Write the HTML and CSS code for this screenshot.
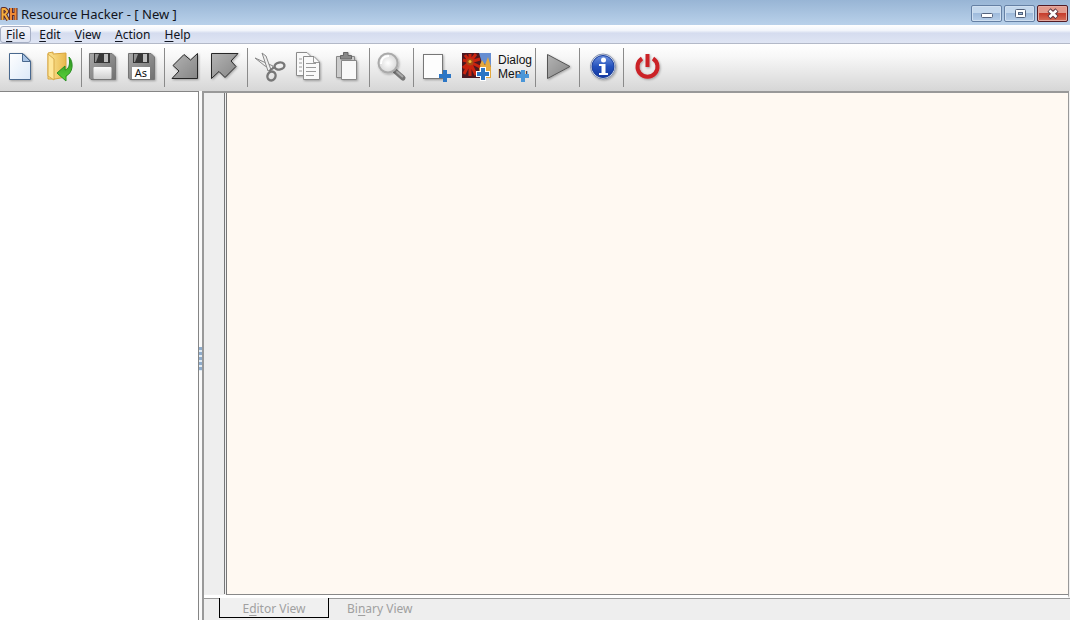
FILE: index.html
```html
<!DOCTYPE html>
<html lang="en">
<head>
<meta charset="utf-8">
<title>Resource Hacker - [ New ]</title>
<link rel="stylesheet" href="styles.css">
</head>
<body>
<div class="window">
  <header class="titlebar">
    <svg class="logo" width="18" height="16" viewBox="0 0 18 16" fill="none" stroke-linejoin="round">
      <g stroke="#5c2a2c" stroke-width="4"><path d="M2.500 14V3H5L7 5V6L5 8.500H3M5 8.500L8 14"/><path d="M11 2V14M15.500 2V14M11 8H15.500"/></g>
      <path stroke="#f8ae3c" stroke-width="2" d="M2.500 14V3H5L7 5V6L5 8.500H3M5 8.500L8 14"/>
      <path stroke="#ee8a35" stroke-width="2" d="M11 2V14M15.500 2V14M11 8H15.500"/>
    </svg>
    <h1 class="title">Resource Hacker - [ New ]</h1>
    <div class="controls">
      <button class="control" aria-label="Minimize"><svg width="14" height="12" viewBox="0 0 14 12"><rect x="1.500" y="5.500" width="11" height="4" rx="1" fill="#fff" stroke="#53627c"/></svg></button>
      <button class="control" aria-label="Maximize"><svg width="14" height="12" viewBox="0 0 14 12"><rect x="2.500" y="1.500" width="10" height="8" rx="1" fill="#fff" stroke="#53627c"/><rect x="5.500" y="4.500" width="4" height="2" fill="#9bb8d8" stroke="#53627c"/></svg></button>
      <button class="control close" aria-label="Close"><svg width="14" height="12" viewBox="0 0 14 12"><path d="M3 2L11 9.500M11 2L3 9.500" stroke="#5a3540" stroke-width="4.500"/><path d="M3.500 2.500L10.500 9M10.500 2.500L3.500 9" stroke="#fff" stroke-width="2.600"/></svg></button>
    </div>
  </header>

  <nav class="menubar">
    <button class="menu active"><u>F</u>ile</button>
    <button class="menu"><u>E</u>dit</button>
    <button class="menu"><u>V</u>iew</button>
    <button class="menu"><u>A</u>ction</button>
    <button class="menu"><u>H</u>elp</button>
  </nav>

  <div class="toolbar" role="toolbar">
    <svg class="defs" width="0" height="0">
      <defs>
        <linearGradient id="page" x1="0" y1="0" x2="1" y2="1"><stop offset="0" stop-color="#fff"/><stop offset="1" stop-color="#dce9f8"/></linearGradient>
        <linearGradient id="metal" x1="0" y1="0" x2="1" y2="1"><stop offset="0" stop-color="#a8a8a8"/><stop offset="1" stop-color="#707070"/></linearGradient>
        <linearGradient id="folder" x1="0" y1="0" x2="1" y2="0"><stop offset="0" stop-color="#fbe494"/><stop offset="1" stop-color="#e9b94d"/></linearGradient>
        <linearGradient id="green" x1="0" y1="0" x2="0" y2="1"><stop offset="0" stop-color="#2b8f21"/><stop offset="1" stop-color="#5cd63a"/></linearGradient>
        <linearGradient id="arrow" x1="0" y1="0" x2="1" y2="1"><stop offset="0" stop-color="#b4b4b4"/><stop offset="1" stop-color="#858585"/></linearGradient>
        <linearGradient id="label" x1="0" y1="0" x2="0" y2="1"><stop offset="0" stop-color="#fafafa"/><stop offset="1" stop-color="#cfcfcf"/></linearGradient>
        <linearGradient id="blue" x1="0" y1="0" x2="0" y2="1"><stop offset="0" stop-color="#6f93e0"/><stop offset=".5" stop-color="#2452bd"/><stop offset="1" stop-color="#1437a0"/></linearGradient>
        <radialGradient id="glass"><stop offset="0" stop-color="#fff"/><stop offset="1" stop-color="#d8d8d8"/></radialGradient>
        <filter id="shadow" x="-20%" y="-20%" width="150%" height="150%"><feDropShadow dx="1" dy="1" stdDeviation="1" flood-opacity=".3"/></filter>
      </defs>
    </svg>

    <button class="tool" aria-label="New"><svg viewBox="2 48 39 38"><path filter="url(#shadow)" d="M9.500 53.500H23L30.500 61V79.500H9.500Z" fill="url(#page)" stroke="#49688e"/><path d="M22.500 53.500V61.500H30.500Z" fill="#a9c4e5" stroke="#49688e"/></svg></button>
    <button class="tool" aria-label="Open"><svg viewBox="41 48 39 38">
      <path d="M48 53L53 52V54L66 53V77L55 79H48Z" fill="url(#folder)" stroke="#d8a53e"/>
      <path d="M48 54L54 59V80L48 76Z" fill="#ffe79a" stroke="#d8aa49"/>
      <path d="M69 57C74 62 73 73 66 76V81L57 73L65 66V70C70 69 70 62 69 57Z" fill="url(#green)" stroke="#288f20"/>
    </svg></button>
    <span class="divider"></span>
    <button class="tool" aria-label="Save"><svg viewBox="85 48 39 38"><g filter="url(#shadow)"><path d="M89.500 53.500H112L115.500 57V79.500H91L89.500 78Z" fill="url(#metal)" stroke="#747474"/><path d="M94 53H110V63H94Z" fill="#383838"/><path d="M95 54H99L96 62H95Z" fill="#929292"/><rect x="104" y="54" width="4" height="8" fill="#bfbfbf"/><rect x="93.500" y="67" width="18" height="12" rx="1" fill="url(#label)"/></g></svg></button>
    <button class="tool" aria-label="Save As"><svg viewBox="124 48 39 38"><g filter="url(#shadow)"><path d="M128.500 53.500H151L154.500 57V79.500H130L128.500 78Z" fill="url(#metal)" stroke="#747474"/><path d="M133 53H149V63H133Z" fill="#383838"/><path d="M134 54H138L135 62H134Z" fill="#929292"/><rect x="143" y="54" width="4" height="8" fill="#bfbfbf"/><rect x="132" y="67" width="18" height="12" fill="#fff"/></g><text class="as-text" x="141" y="77" text-anchor="middle">As</text></svg></button>
    <span class="divider"></span>
    <button class="tool" aria-label="Load script"><svg viewBox="168 48 39 38"><path filter="url(#shadow)" d="M197.500 53.500V78.500H172L179 71L173 65.500L184 54.500L190.500 60Z" fill="url(#arrow)" stroke="#252525"/></svg></button>
    <button class="tool" aria-label="Save script"><svg viewBox="207 48 39 38"><path filter="url(#shadow)" d="M211.500 53.500H238L231 61L236 66.500L225 77.500L219 71.500L211.500 78.500Z" fill="url(#arrow)" stroke="#252525"/></svg></button>
    <span class="divider"></span>
    <button class="tool" aria-label="Cut"><svg viewBox="251 48 39 38" fill="none"><path d="M255 58L273 66L272 69L265 66Z" fill="#eee" stroke="#888"/><path d="M262 53L266 56L271 70L268 71Z" fill="#eee" stroke="#888"/><path d="M269 71L275 67" stroke="#777" stroke-width="2"/><ellipse cx="279.500" cy="66" rx="5" ry="3.500" transform="rotate(-12 279.500 66)" stroke="#777" stroke-width="2.400"/><ellipse cx="271.500" cy="76" rx="4" ry="4.500" transform="rotate(25 271.500 76)" stroke="#777" stroke-width="2.400"/></svg></button>
    <button class="tool" aria-label="Copy"><svg viewBox="290 48 39 38"><g filter="url(#shadow)" fill="#f9f9f9" stroke="#8b8b8b"><path d="M296.500 52.500H307L311.500 57V75.500H296.500Z"/><path d="M303.500 56.500H314L319.500 62V79.500H303.500Z"/></g><path d="M299 59H302M299 63H302M299 67H302M299 71H302M306 63.500H316M306 67.500H316M306 71.500H316M306 75.500H314M313.500 57V62.500H319" fill="none" stroke="#999"/></svg></button>
    <button class="tool" aria-label="Paste"><svg viewBox="329 48 39 38"><g filter="url(#shadow)"><path d="M336.500 56.500H354.500V77.500H336.500Z" fill="#ccc" stroke="#888"/><path d="M340.500 59V55.500H343.500V52.500H348V55.500H351.500V59Z" fill="#888" stroke="#666"/><path d="M341.500 60.500H356.500V79.500H341.500Z" fill="#f9f9f9" stroke="#888"/></g></svg></button>
    <span class="divider"></span>
    <button class="tool" aria-label="Find"><svg viewBox="373 48 39 38"><path d="M395 71L403 78" stroke="#777" stroke-width="5" stroke-linecap="round"/><path d="M396 71L403 77" stroke="#aaa" stroke-width="2"/><circle filter="url(#shadow)" cx="388" cy="63" r="9.500" fill="url(#glass)" stroke="#aaa" stroke-width="2"/><path d="M381 64C381 59 384 56 389 56" fill="none" stroke="#fff" stroke-width="2"/></svg></button>
    <span class="divider"></span>
    <button class="tool" aria-label="Add resource"><svg viewBox="417 48 39 38"><rect filter="url(#shadow)" x="423.500" y="54.500" width="19" height="24" fill="#fdfdfd" stroke="#777"/><path d="M445 70V82M439 76H451" stroke="#2c76c5" stroke-width="4"/></svg></button>
    <button class="tool" aria-label="Add image"><svg viewBox="456 48 39 38">
      <rect x="462" y="53" width="29" height="25" fill="#4b1821"/><path d="M479 53H491V66L482 63Z" fill="#668ed2"/><path d="M479 67L482 60L485 65L488 57L491 67V78H480Z" fill="#e4a93f"/>
      <path d="M470 62L470 54M470 62L476 54M470 62L480 59M470 62L480 67M470 62L476 75M470 62L470 76M470 62L464 74M470 62L463 68M470 62L463 60M470 62L465 55" stroke="#c9230f" stroke-width="3"/><circle cx="470" cy="62" r="3.500" fill="#a74c16"/><circle cx="470" cy="61.500" r="1.500" fill="#f1bf35"/>
      <path d="M483 67V81M476 74H490" stroke="#fff" stroke-width="6"/><path d="M483 68V80M477 74H489" stroke="#2c76c5" stroke-width="4"/>
    </svg></button>
    <button class="tool" aria-label="Add dialog or menu"><svg viewBox="495 48 39 38"><text class="dialog-text" x="498" y="64">Dialog</text><text class="dialog-text" x="498" y="78">Menu</text><path d="M523 70V82M517 76H529" stroke="#4a96d8" stroke-width="4"/></svg></button>
    <span class="divider"></span>
    <button class="tool" aria-label="Compile"><svg viewBox="539 48 39 38"><path filter="url(#shadow)" d="M547.500 54.500L570 66.500L547.500 78.500Z" fill="url(#arrow)" stroke="#555" stroke-linejoin="round"/></svg></button>
    <span class="divider"></span>
    <button class="tool" aria-label="About"><svg viewBox="583 48 39 38"><circle filter="url(#shadow)" cx="603" cy="66.500" r="12.500" fill="#dde3ef" stroke="#8390ad"/><circle cx="603" cy="66.500" r="11" fill="url(#blue)" stroke="#193e9d"/><circle cx="603.500" cy="60" r="2.500" fill="#fff"/><path d="M599 64H605.500V73H608V75H599V73H601.500V66H599Z" fill="#fff"/></svg></button>
    <span class="divider"></span>
    <button class="tool" aria-label="Exit"><svg viewBox="627 48 39 38" fill="none"><g filter="url(#shadow)" stroke="#cb2128" stroke-width="4"><path d="M642 58.500A10 10 0 1 0 653 58.500"/><path d="M647.500 54V67"/></g></svg></button>
  </div>

  <main class="workspace">
    <aside class="tree" aria-label="Resources"></aside>
    <div class="splitter"><span class="grip"></span></div>
    <section class="document">
      <div class="editor">
        <div class="gutter"></div>
        <textarea class="code" aria-label="Editor" spellcheck="false"></textarea>
      </div>
      <div class="tabs">
        <button class="tab selected">E<u>d</u>itor View</button>
        <button class="tab">Bi<u>n</u>ary View</button>
      </div>
    </section>
  </main>
</div>
</body>
</html>
```
FILE: styles.css
```css
* { box-sizing: border-box; }

body {
  margin: 0;
  font: 12px/16px "Noto Sans", "Open Sans", sans-serif;
  color: #101420;
}

button {
  margin: 0;
  padding: 0;
  border: 0;
  background: none;
  font: inherit;
  color: inherit;
}

u { text-underline-offset: 2px; }

.window {
  display: flex;
  flex-direction: column;
  height: 100vh;
  background: #f0f0f0;
}

.titlebar {
  display: flex;
  align-items: center;
  height: 25px;
  padding: 2px 2px 0 0;
  background: linear-gradient(#98b5d5, #b9d1ea);
}

.logo { flex: none; }

.title {
  flex: 1;
  margin: 0 0 0 3px;
  font-size: 13px;
  font-weight: 400;
}

.controls { display: flex; gap: 2px; }

.control {
  display: flex;
  align-items: center;
  justify-content: center;
  width: 31px;
  height: 17px;
  border: 1px solid #6580a4;
  border-radius: 2px;
  background: linear-gradient(#c4d8ed 50%, #9fbbdc 50%, #b6cee8);
  box-shadow: inset 0 0 0 1px #d0e0f1;
}

.close {
  border-color: #521b24;
  background: linear-gradient(#e29a8c 45%, #c63d2c 50%, #d7705a);
  box-shadow: inset 0 0 0 1px #e5aaa0;
}

.menubar {
  display: flex;
  height: 19px;
  padding-top: 1px;
  border-bottom: 1px solid #b3b9c8;
  background: linear-gradient(#fff 0, #f2f5fb 30%, #d5dcef 45%, #dfe5f4);
}

.menu {
  padding: 0 6px;
  border: 1px solid transparent;
  border-radius: 3px;
  line-height: 15px;
}

.menu.active {
  margin-right: 1px;
  padding: 0 5px;
  border-color: #a6afc4;
  background: linear-gradient(#f4f6fb, #dfe4f2);
}

.toolbar {
  display: flex;
  height: 47px;
  padding: 4px 2px;
  background: linear-gradient(#fff 0, #f8f8f8 25%, #d6d6d6);
}

.defs { position: absolute; }

.tool { width: 39px; height: 38px; }

.tool svg { display: block; width: 39px; height: 38px; }

.divider {
  width: 5px;
  background: linear-gradient(#8a8a8a, #8a8a8a) left 1px top / 1px 100% no-repeat;
}

.as-text {
  font: 11px "Noto Sans", sans-serif;
  fill: #111;
}

.dialog-text {
  font: 12px "Liberation Sans Narrow", "Liberation Sans", sans-serif;
  fill: #111;
}

.workspace {
  display: flex;
  flex: 1;
  min-height: 0;
}

.tree {
  width: 199px;
  border-top: 1px solid #858585;
  border-right: 1px solid #858585;
  background: #fff;
}

.splitter {
  display: flex;
  align-items: center;
  width: 3px;
  padding-top: 6px;
  background: #fafafa;
}

.grip {
  width: 3px;
  height: 24px;
  background: repeating-linear-gradient(#8faccb 0 3px, #e2ecf5 3px 5px);
}

.document {
  display: flex;
  flex: 1;
  flex-direction: column;
  min-width: 0;
  border-left: 2px solid #999;
}

.editor {
  display: flex;
  flex: 1;
  margin-right: 1px;
  border-top: 2px solid #999;
  border-right: 1px solid #999;
  border-bottom: 3px solid #fff;
}

.gutter {
  width: 21px;
  margin-bottom: 1px;
  border-right: 1px solid #777;
  background: #eee;
}

.code {
  flex: 1;
  margin: 0 0 0 1px;
  padding: 4px;
  border: 0;
  border-left: 1px solid #777;
  border-bottom: 1px solid #888;
  outline: 0;
  resize: none;
  background: #fff9f2;
  font: 13px/16px "Liberation Mono", monospace;
}

.tabs {
  display: flex;
  height: 22px;
  padding-left: 15px;
  background: linear-gradient(#999, #999) top / 100% 1px no-repeat #eee;
  color: #a0a0a0;
}

.tab {
  height: 20px;
  padding: 2px 18px 0;
}

.tab.selected {
  width: 110px;
  border: 1px solid #000;
  border-top: 0;
  background: #f0f0f0;
}
```
